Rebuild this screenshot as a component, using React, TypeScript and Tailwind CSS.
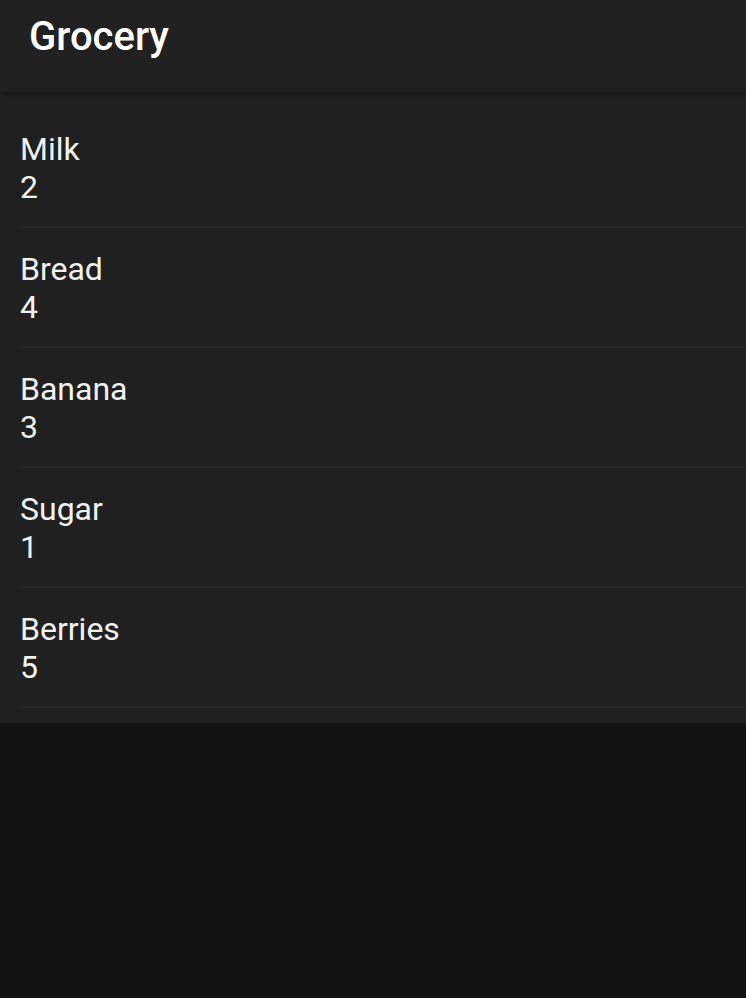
const items = [
  { name: "Milk", qty: 2 },
  { name: "Bread", qty: 4 },
  { name: "Banana", qty: 3 },
  { name: "Sugar", qty: 1 },
  { name: "Berries", qty: 5 },
];

export default function App() {
  return (
    <div className="min-h-[998px] bg-[#121212] font-['Roboto',sans-serif]">
      <header className="relative z-10 flex h-[92px] items-start bg-[#212121] px-[29px] shadow-[0_2px_4px_rgba(0,0,0,0.35)]">
        <h1 className="mt-[14px] text-[40px] leading-[46px] font-medium text-white">Grocery</h1>
      </header>
      <ul className="bg-[#202020] pt-[16px] pb-[15px]">
        {items.map((item) => (
          <li key={item.name} className="ml-[20px] border-b-2 border-[#262626] pt-[22px] pb-[20px] text-[32px] leading-[38px] text-[#f2f2f2]">
            <div>{item.name}</div>
            <div>{item.qty}</div>
          </li>
        ))}
      </ul>
    </div>
  );
}
